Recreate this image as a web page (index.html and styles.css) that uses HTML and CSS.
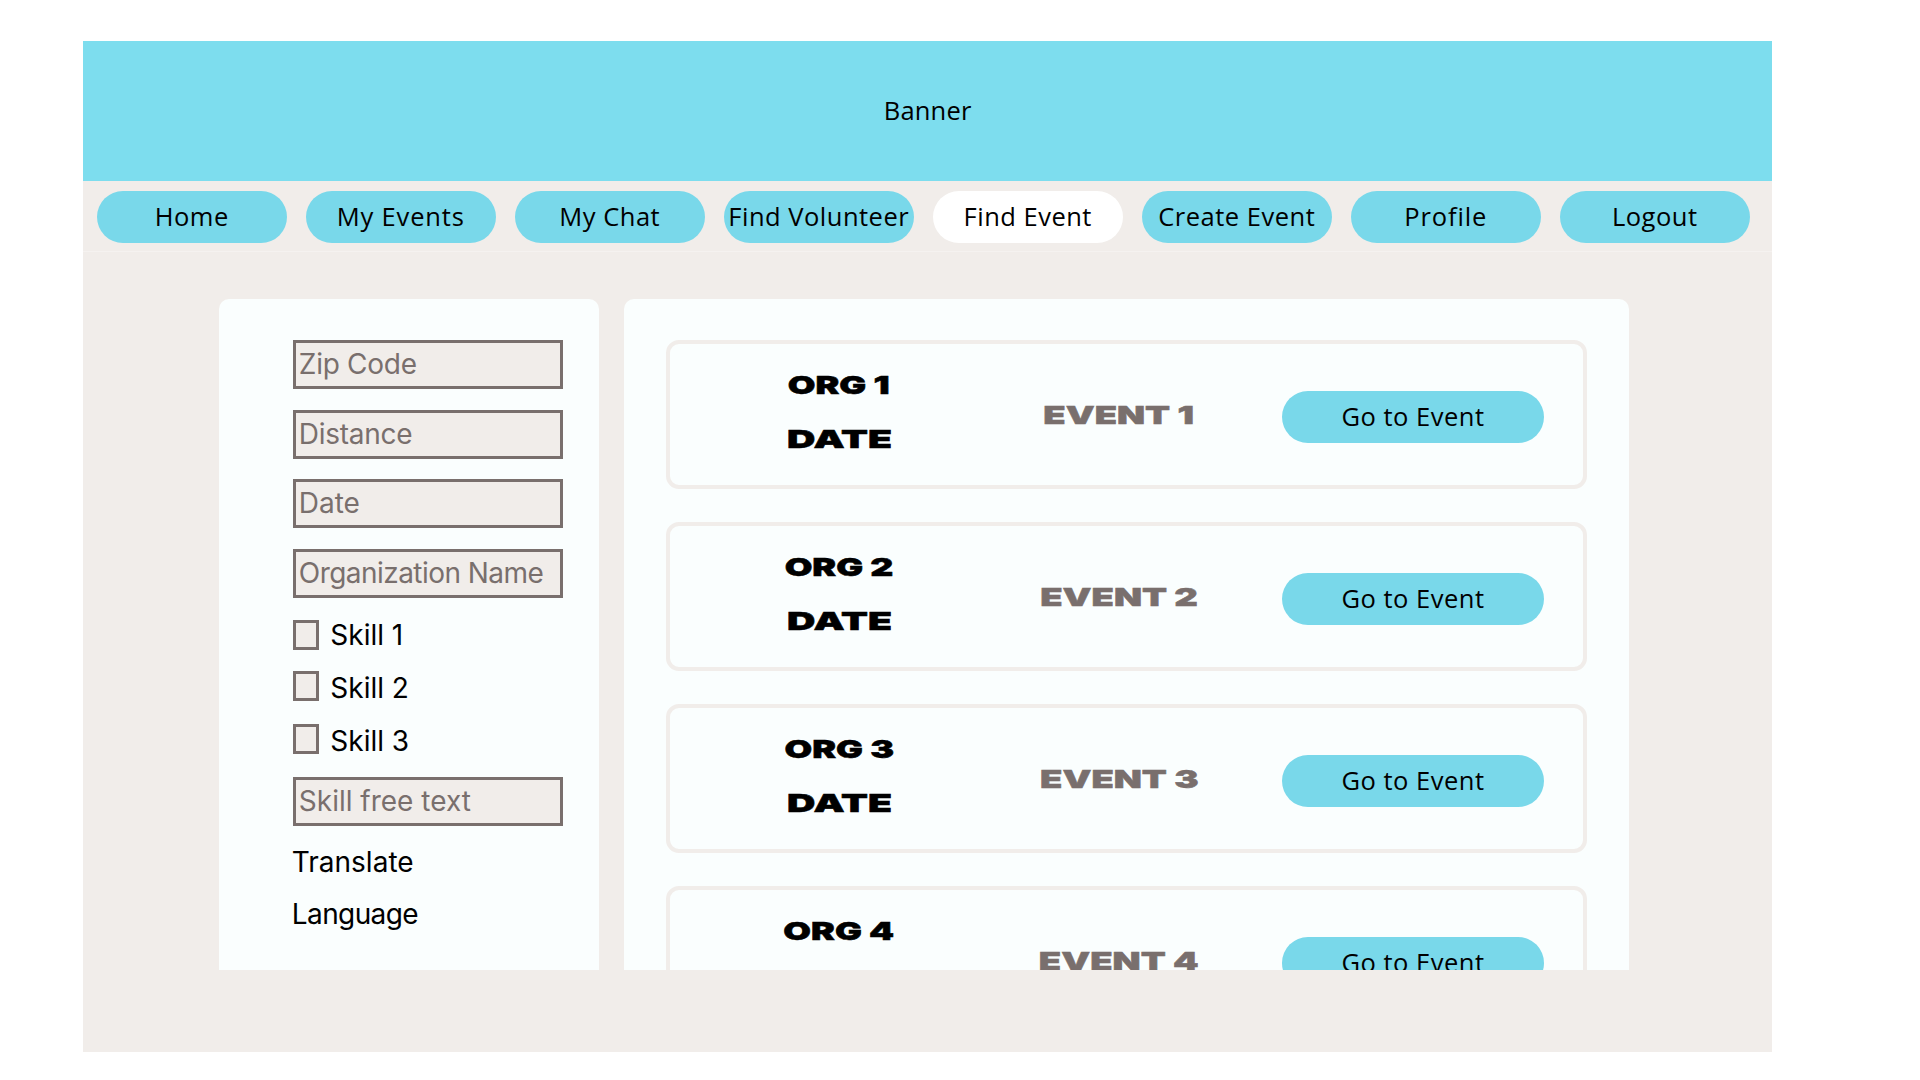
FILE: index.html
```html
<!DOCTYPE html>
<html lang="en">
<head>
<meta charset="utf-8">
<title>Find Event</title>
<link rel="stylesheet" href="styles.css">
</head>
<body>
<div class="page">
  <header class="banner">Banner</header>
  <nav class="nav">
    <a class="pill">Home</a>
    <a class="pill pill-loose">My Events</a>
    <a class="pill">My Chat</a>
    <a class="pill">Find Volunteer</a>
    <a class="pill pill-active">Find Event</a>
    <a class="pill">Create Event</a>
    <a class="pill pill-loose">Profile</a>
    <a class="pill">Logout</a>
  </nav>
  <main class="content">
    <aside class="panel filters">
      <div class="fields">
        <div class="field field-snug">Zip Code</div>
        <div class="field field-snug">Distance</div>
        <div class="field">Date</div>
        <div class="field field-tight">Organization Name</div>
      </div>
      <div class="skills">
        <label class="skill"><span class="box"></span>Skill 1</label>
        <label class="skill"><span class="box"></span>Skill 2</label>
        <label class="skill"><span class="box"></span>Skill 3</label>
      </div>
      <div class="field">Skill free text</div>
      <div class="links">
        <a>Translate</a>
        <a class="link-tight">Language</a>
      </div>
    </aside>
    <section class="panel events">
      <article class="card">
        <div class="org"><span class="wide">ORG 1</span><span class="wide wide-date">DATE</span></div>
        <div class="event"><span class="wide">EVENT 1</span></div>
        <a class="pill go">Go to Event</a>
      </article>
      <article class="card">
        <div class="org"><span class="wide">ORG 2</span><span class="wide wide-date">DATE</span></div>
        <div class="event"><span class="wide">EVENT 2</span></div>
        <a class="pill go">Go to Event</a>
      </article>
      <article class="card">
        <div class="org"><span class="wide">ORG 3</span><span class="wide wide-date">DATE</span></div>
        <div class="event"><span class="wide">EVENT 3</span></div>
        <a class="pill go">Go to Event</a>
      </article>
      <article class="card">
        <div class="org"><span class="wide">ORG 4</span></div>
        <div class="event"><span class="wide">EVENT 4</span></div>
        <a class="pill go">Go to Event</a>
      </article>
    </section>
  </main>
</div>
</body>
</html>
```
FILE: styles.css
```css
* { box-sizing: border-box; }

body {
  margin: 0;
  height: 1080px;
  overflow: hidden;
  background: #fff;
  color: #000;
  font-family: "Open Sans", sans-serif;
  font-size: 25.5px;
}

.page {
  display: flow-root;
  width: 1689.3px;
  height: 1010.7px;
  margin: 41.3px 0 0 83px;
  background: #f1edea;
}

.banner {
  display: flex;
  align-items: center;
  justify-content: center;
  height: 140px;
  padding-bottom: 2px;
  background: #7dddee;
  letter-spacing: 0.2px;
}

.nav {
  display: flex;
  gap: 19.5px;
  height: 71px;
  padding: 9.7px 14px 0;
  border-bottom: 1px solid #f5f2f0;
}

.pill {
  display: flex;
  flex: none;
  align-items: center;
  justify-content: center;
  width: 189.5px;
  height: 52.3px;
  padding-bottom: 2px;
  border-radius: 26px;
  background: #79d8ea;
  letter-spacing: 0.5px;
  white-space: nowrap;
}

.pill-loose { letter-spacing: 0.85px; }
.pill-active { background: #fff; }

.content {
  display: flex;
  gap: 25px;
  height: 671px;
  margin: 46.7px 0 0 136px;
}

.panel {
  overflow: hidden;
  border-radius: 10px 10px 0 0;
  background: #fafefe;
}

.filters {
  width: 380px;
  padding: 41.3px 35px 0 73.8px;
  font-family: "Inter", sans-serif;
  font-size: 28px;
}

.fields { display: grid; gap: 20.6px; }

.field {
  width: 270px;
  height: 49px;
  padding-left: 3px;
  border: 3px solid #796f6d;
  background: #f1edea;
  color: #796f6d;
  line-height: 43px;
  white-space: nowrap;
}

.field-snug { letter-spacing: -0.28px; }
.field-tight { letter-spacing: -0.54px; }

.skills { margin: 10px 0; }

.skill {
  display: flex;
  align-items: center;
  gap: 11.5px;
  height: 53px;
}

.box {
  width: 26px;
  height: 30px;
  border: 3px solid #796f6d;
  background: #f1edea;
}

.skill + .skill .box { margin-bottom: 3px; }
.skill + .skill + .skill .box { margin-bottom: 4px; }

.links {
  display: grid;
  margin: 10px 0 0 -1px;
  line-height: 52.4px;
}

.link-tight { letter-spacing: -0.6px; }

.events {
  display: flex;
  flex-direction: column;
  gap: 33px;
  width: 1005px;
  padding: 41.3px 42px 0;
}

.card {
  display: grid;
  flex: none;
  grid-template-columns: 338px 222px 314px;
  justify-content: start;
  height: 149px;
  border: 4px solid #f1edea;
  border-radius: 13px;
}

.org {
  padding-top: 14px;
  line-height: 54px;
}

.event {
  color: #796f6d;
  line-height: 142px;
}

.org, .event {
  display: flex;
  flex-direction: column;
  align-items: center;
  font-family: "Inter", sans-serif;
  font-size: 25px;
  font-weight: 900;
  white-space: nowrap;
}

/* Extended display face: stretched horizontally from the heavy weight. */
.wide {
  transform: scaleX(1.43);
  -webkit-text-stroke: 0.5px currentColor;
}

.wide-date { transform: scaleX(1.57); }
.event .wide { transform: scaleX(1.46); }

.go {
  width: 262px;
  margin: 46.3px 0 0 52px;
}
```
